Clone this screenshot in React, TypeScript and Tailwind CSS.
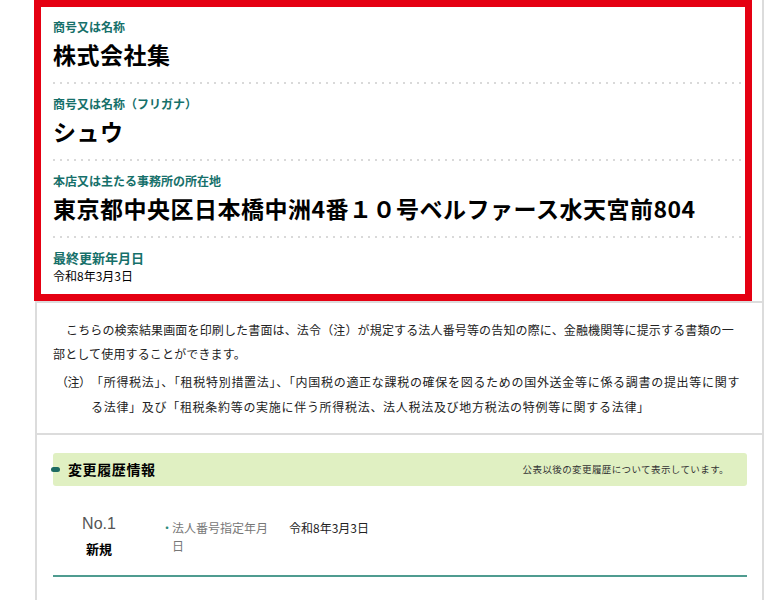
import React from "react";

const fields = [
  { label: "商号又は名称", value: "株式会社集" },
  { label: "商号又は名称（フリガナ）", value: "シュウ" },
  { label: "本店又は主たる事務所の所在地", value: "東京都中央区日本橋中洲4番１０号ベルファース水天宮前804" },
];

function Dots() {
  return (
    <div className="h-[2px] w-full bg-[linear-gradient(to_right,#d9d9d9_2px,transparent_2px)] bg-[length:7px_2px] bg-repeat-x" />
  );
}

export default function App() {
  return (
    <div
      className="min-h-[600px] w-full bg-white text-black"
      style={{ fontFamily: '"Noto Sans CJK JP", "Noto Sans", sans-serif' }}
    >
      <div className="ml-[35px] w-[729px] border-x-2 border-[#dcdcdc] min-h-[600px]">
        {/* basic info, highlighted */}
        <div className="relative border-b-2 border-[#dcdcdc] pl-4 pr-[15px]">
          {fields.map((f, i) => (
            <div key={i}>
              <div className={i === 0 ? "pt-[19px] pb-[13px]" : "pt-3 pb-[13px]"}>
                <p className="text-[12px] leading-4 font-bold text-[#16706a]">{f.label}</p>
                <p className="mt-1 text-[23px] leading-[30px] font-bold tracking-[0.5px] whitespace-nowrap">{f.value}</p>
              </div>
              <Dots />
            </div>
          ))}
          <div className="pt-3 pb-[17px]">
            <p className="text-[13px] leading-4 font-bold text-[#16706a]">最終更新年月日</p>
            <p className="mt-[2px] text-[12px] leading-4">令和8年3月3日</p>
          </div>
          <div className="pointer-events-none absolute -left-[3px] top-0 h-[301px] w-[718px] border-[7px] border-[#e50012]" />
        </div>

        {/* notice */}
        <div className="border-b-2 border-[#dcdcdc] pl-4 pr-[15px] pt-[15px] pb-[14px] text-[12px] text-[#222] whitespace-nowrap">
          <p className="indent-[13px] leading-6 tracking-[0.15px]">
            こちらの検索結果画面を印刷した書面は、法令（注）が規定する法人番号等の告知の際に、金融機関等に提示する書類の一
            <br />
            部として使用することができます。
          </p>
          <div className="mt-[3px] flex leading-[25px]">
            <span className="ml-[3px] w-[35px] shrink-0 tracking-[-0.5px]">（注）</span>
            <p className="tracking-[0.7px]">
              「所得税法」、「租税特別措置法」、「内国税の適正な課税の確保を図るための国外送金等に係る調書の提出等に関す
              <br />
              る法律」及び「租税条約等の実施に伴う所得税法、法人税法及び地方税法の特例等に関する法律」
            </p>
          </div>
        </div>

        {/* change history */}
        <div className="pl-4 pr-[15px] pt-[18px]">
          <div className="flex h-[33px] items-center justify-between rounded-[3px] bg-[#e0f0c2] pr-[18px]">
            <div className="flex items-center">
              <span className="-ml-[2px] h-[5px] w-[9px] rounded-full bg-[#1d6b62]" />
              <h2 className="ml-[8px] text-[14px] font-bold tracking-[0.6px]">変更履歴情報</h2>
            </div>
            <p className="text-[9.5px] text-[#333] tracking-[0.4px]">公表以後の変更履歴について表示しています。</p>
          </div>

          <div className="flex border-b-2 border-[#4f9c90] pt-[28px] pb-[16px]">
            <div className="flex w-[92px] shrink-0 flex-col items-center">
              <span className="text-[16px] leading-5 text-[#555]" style={{ fontFamily: '"Liberation Sans", Arial, sans-serif' }}>
                No.1
              </span>
              <span className="mt-[5px] text-[13px] leading-5 font-bold">新規</span>
            </div>
            <div className="ml-[16px] flex pt-[5px] text-[12px] leading-[18px]">
              <span className="w-[11px] text-[#2a8a7c]">・</span>
              <span className="w-[97px] text-[#777]">法人番号指定年月日</span>
              <span className="ml-[20px] text-[#222]">令和8年3月3日</span>
            </div>
          </div>
        </div>
      </div>
    </div>
  );
}
